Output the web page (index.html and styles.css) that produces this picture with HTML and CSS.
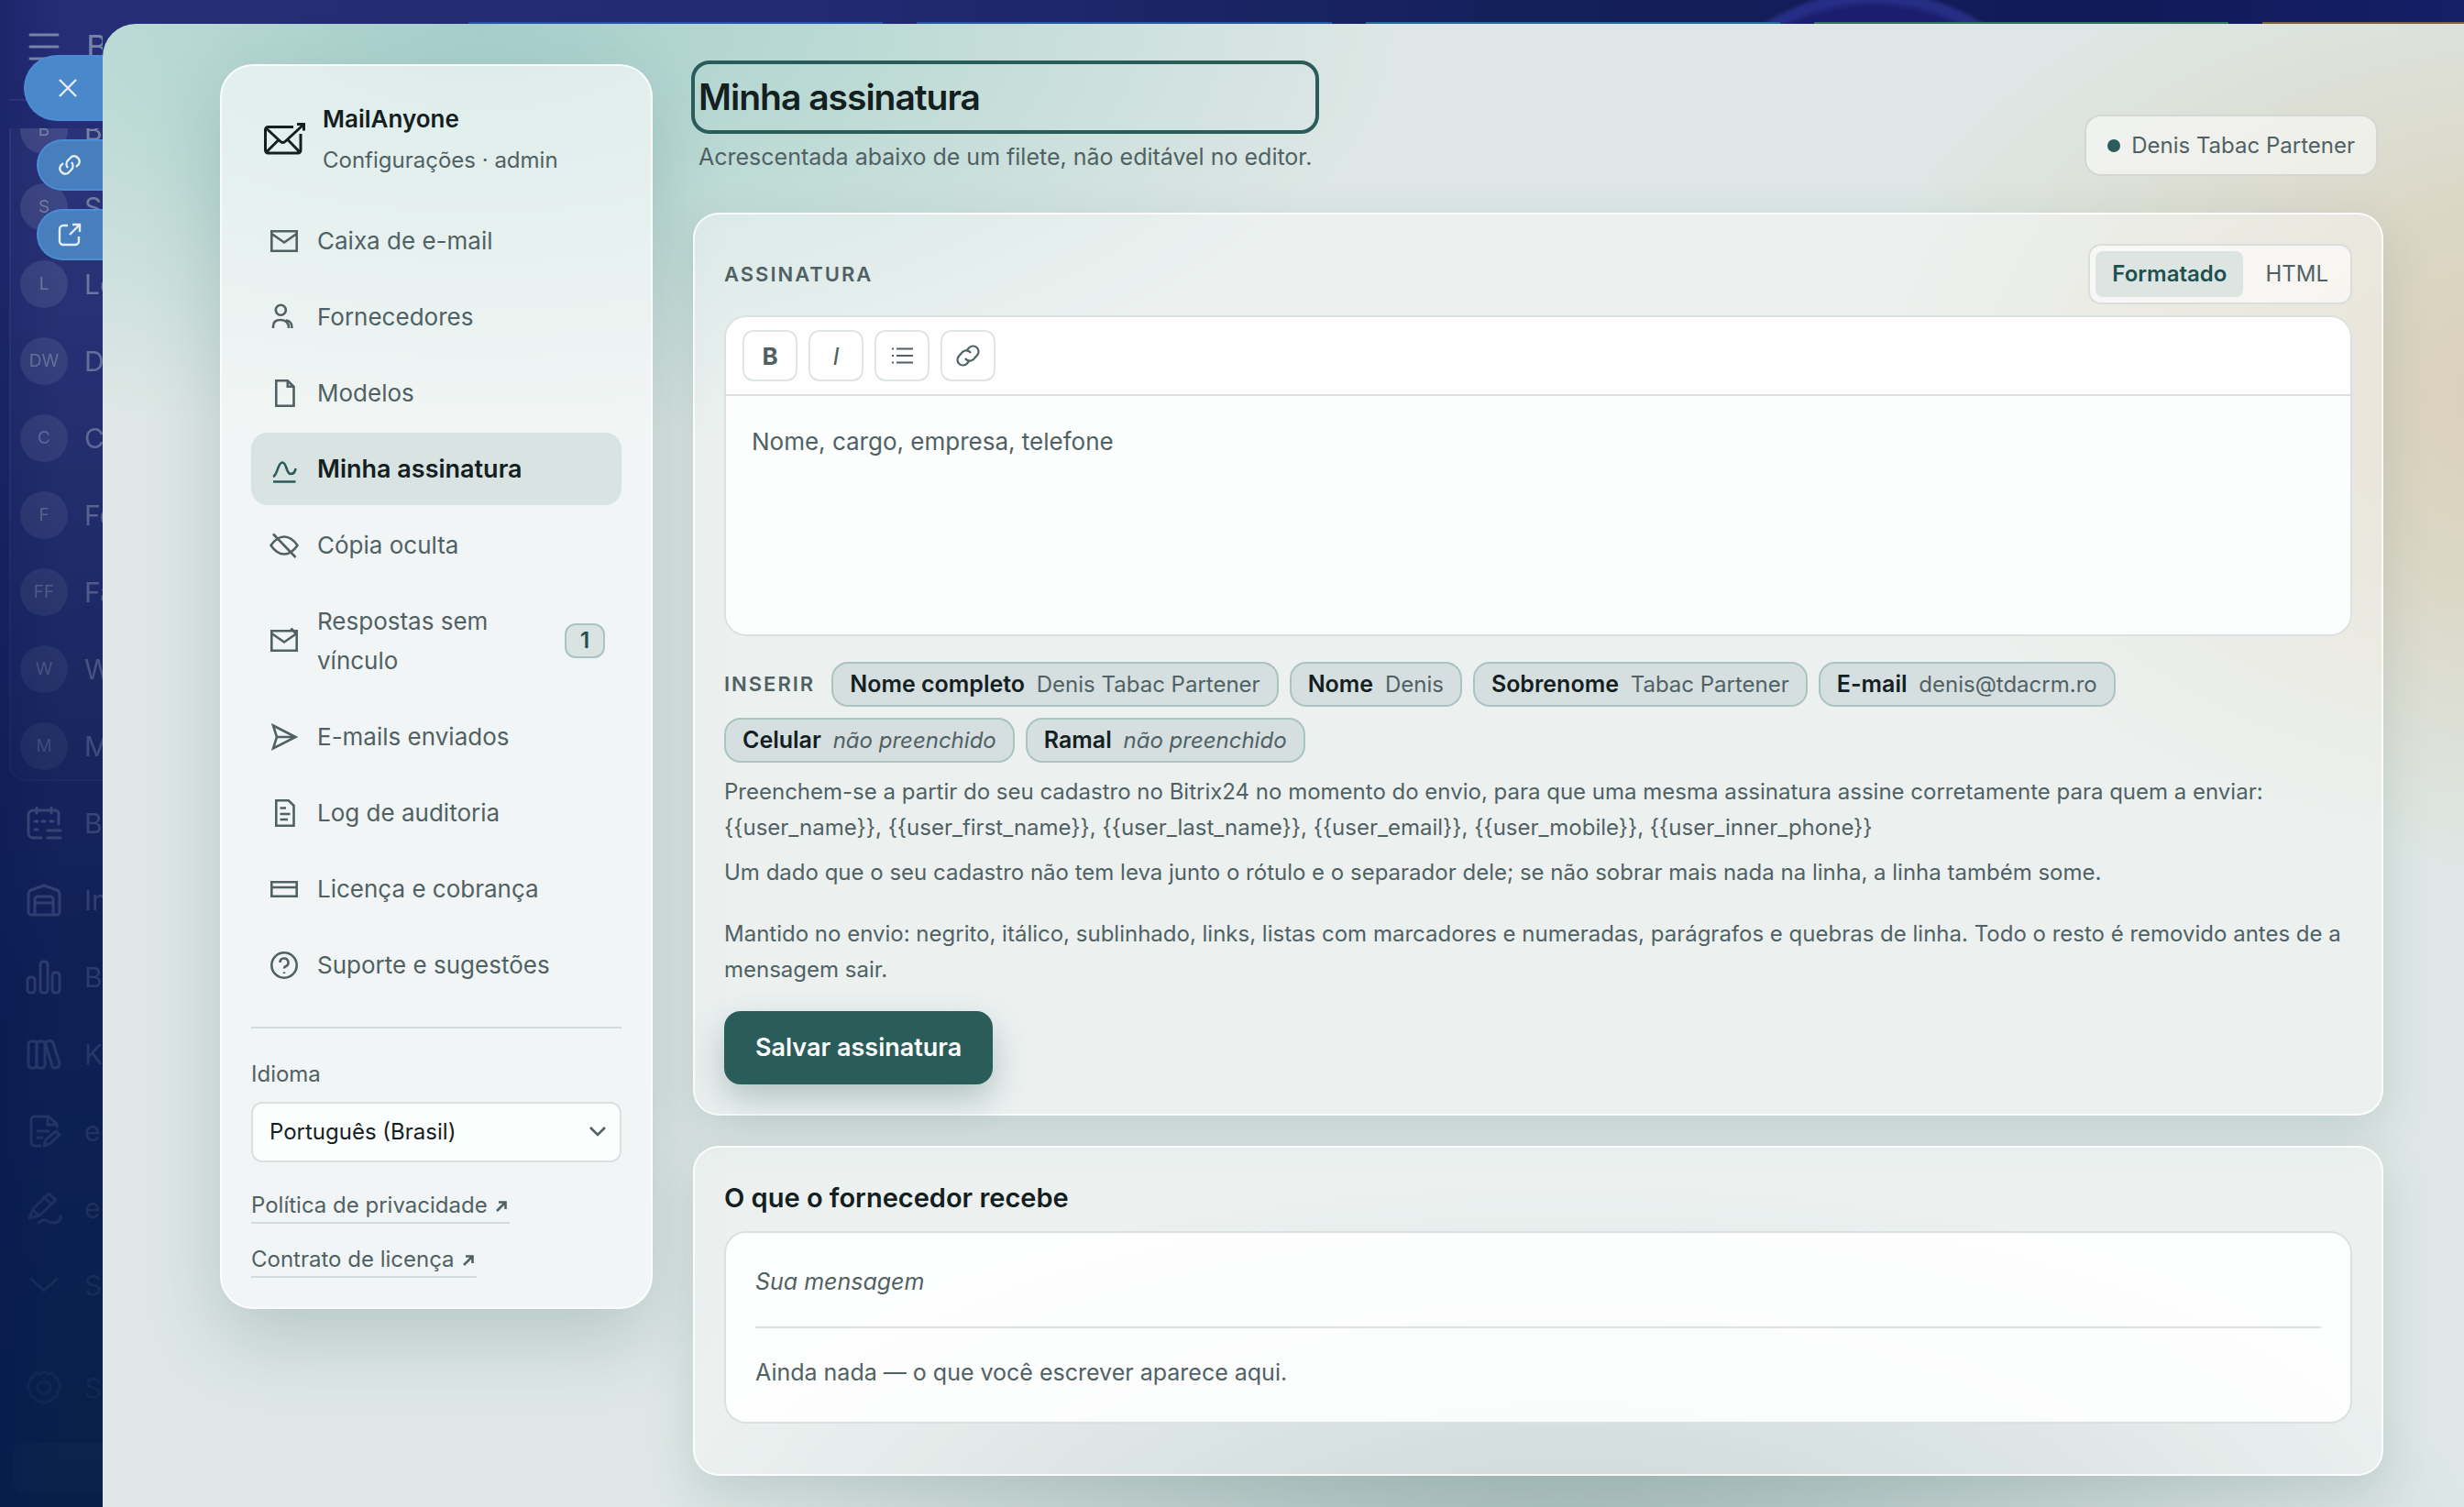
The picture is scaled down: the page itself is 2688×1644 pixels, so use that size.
FILE: index.html
```html
<!DOCTYPE html>
<html lang="pt-BR">
<head>
  <meta charset="UTF-8">
  <meta name="viewport" content="width=device-width, initial-scale=1.0">
  <title>MailAnyone - Minha assinatura</title>
  <link rel="stylesheet" href="styles.css">
</head>
<body>
  <!-- Portal menu behind the slider -->
  <aside class="rail">
    <div class="rail-top">
      <svg class="rail-icon" viewBox="0 0 40 40"><path d="M5 7h30M5 20h30M5 33h30"/></svg>
      <span class="rail-title">B</span>
    </div>
    <div class="rail-fade">
      <ul class="rail-group">
        <li><span class="avatar">B</span>B</li>
        <li><span class="avatar">S</span>S</li>
        <li><span class="avatar">L</span>Lo</li>
        <li><span class="avatar">DW</span>D</li>
        <li><span class="avatar">C</span>C</li>
        <li><span class="avatar">F</span>Fe</li>
        <li><span class="avatar">FF</span>Fa</li>
        <li><span class="avatar">W</span>W</li>
        <li><span class="avatar">M</span>M</li>
      </ul>
      <ul class="rail-list">
        <li><svg class="rail-icon" viewBox="0 0 40 40"><path d="M17 36H8a5 5 0 0 1-5-5V11a5 5 0 0 1 5-5h24a4 4 0 0 1 4 4v11M12 3v6M28 3v6M10 18h3M18 18h3M27 18h3M10 27h3M24 28h14M24 36h14"/></svg>B</li>
        <li><svg class="rail-icon" viewBox="0 0 40 40"><path d="M3 13c0-2 1-3 3-4l14-5 14 5c2 1 3 2 3 4v20a3 3 0 0 1-3 3H6a3 3 0 0 1-3-3zM10 36V19a3 3 0 0 1 3-3h14a3 3 0 0 1 3 3v17M10 23h20"/></svg>In</li>
        <li><svg class="rail-icon" viewBox="0 0 40 40"><rect x="2" y="20" width="8" height="17" rx="3"/><rect x="16" y="3" width="8" height="34" rx="3"/><rect x="29" y="15" width="8" height="22" rx="3"/></svg>B</li>
        <li><svg class="rail-icon" viewBox="0 0 40 40"><rect x="3" y="6" width="9" height="29" rx="3"/><rect x="12" y="6" width="9" height="29" rx="3"/><path d="M22 10c-1-2 0-4 2-4l2-1c2 0 3 1 4 3l7 22c0 2 0 4-2 4l-3 1c-2 0-3-1-3-2z"/></svg>K</li>
        <li><svg class="rail-icon" viewBox="0 0 40 40"><path d="M16 36h-6a4 4 0 0 1-4-4V8a4 4 0 0 1 4-4h15l9 8v3M24 4v9h10M13 20h12M13 27h5M20 36l2-7 11-9 4 4-11 10z"/></svg>e-</li>
        <li><svg class="rail-icon" viewBox="0 0 40 40"><path d="M4 31l4-10L25 4l8 7-18 17zM20 8l8 8M8 22l6 6M14 36c6-6 9-2 11-1 6 2 14 0 13-6"/></svg>e-</li>
        <li><svg class="rail-icon" viewBox="0 0 40 40"><path d="M6 13l14 13 14-13"/></svg>S</li>
        <li class="rail-settings"><svg class="rail-icon" viewBox="0 0 40 40"><circle cx="20" cy="20" r="7"/><path d="M16 5q4-5 8 0q6-3 7 3q6 0 4 6q5 4 0 9q2 6-4 7q-2 6-7 4q-4 5-8 0q-6 2-7-4q-6-1-4-7q-5-5 0-9q-2-6 4-6q1-6 7-3z"/></svg>S</li>
      </ul>
      <div class="rail-box"></div>
    </div>
    <!-- Slider tabs -->
    <button class="tab tab-close" aria-label="Fechar"><svg viewBox="0 0 28 28"><path d="M5 5l18 18M23 5L5 23"/></svg></button>
    <button class="tab tab-link" aria-label="Copiar link"><svg viewBox="0 0 28 28"><path d="M12 17a6 6 0 0 1 0-8l4-4a6 6 0 0 1 8 8l-3 3M16 11a6 6 0 0 1 0 8l-4 4a6 6 0 0 1-8-8l3-3"/></svg></button>
    <button class="tab tab-open" aria-label="Abrir em nova guia"><svg viewBox="0 0 28 28"><path d="M12 4H7a4 4 0 0 0-4 4v13a4 4 0 0 0 4 4h13a4 4 0 0 0 4-4v-5M17 3h8v8M25 3L14 14"/></svg></button>
  </aside>

  <div class="stage">
    <div class="board">
      <span class="col col-first"></span>
      <span class="col col-blue"></span>
      <span class="col col-cyan"></span>
      <span class="col col-green"></span>
      <span class="col col-gold"></span>
    </div>

    <div class="slider">
      <nav class="sidebar">
        <div class="brand">
          <svg class="logo" viewBox="0 0 48 48"><path d="M34 10.500H6.500a3 3 0 0 0-3 3V36a3 3 0 0 0 3 3H39a3 3 0 0 0 3-3V18M4.500 12L19.500 26q3 3 6 0L45 8M38 7.500h7.500v7M4.500 38L18 24.500M41 38L28 24.500"/></svg>
          <div>
            <strong>MailAnyone</strong>
            <span>Configurações · admin</span>
          </div>
        </div>

        <ul class="menu">
          <li><a href="#"><svg viewBox="0 0 32 32"><path d="M2.300 5.300h27.400v21.400H2.300zM2.300 8L16 17.500 29.700 8"/></svg><span>Caixa de e-mail</span></a></li>
          <li><a href="#"><svg viewBox="0 0 32 32"><circle cx="12.300" cy="8.300" r="5.500"/><path d="M4 28v-2c0-4.500 3-7 8-7 6 0 9 3 9 9M18 19.500c4 0 6.500 3.500 6.500 8.500"/></svg><span>Fornecedores</span></a></li>
          <li><a href="#"><svg viewBox="0 0 32 32"><path d="M7.300 2.300h12.500l6.700 6.500v20.900H7.300zM19.800 2.300v6.500h6.700"/></svg><span>Modelos</span></a></li>
          <li><a href="#" class="active"><svg viewBox="0 0 32 32"><path d="M4 24C9 22 9 8.500 14 8.500s4 12.500 9 12.500c3 0 5-2 5.500-6M4 29.500h24.500"/></svg><span>Minha assinatura</span></a></li>
          <li><a href="#"><svg viewBox="0 0 32 32"><path d="M1.500 16C6 9.500 10.500 6.500 16 6.500S26 9.500 30.500 16C26 22.500 21.500 25.500 16 25.500S6 22.500 1.500 16zM4 3.500L28.500 29"/></svg><span>Cópia oculta</span></a></li>
          <li><a href="#"><svg viewBox="0 0 32 32"><path d="M2.300 5.300h27.400v21.400H2.300zM2.300 8L16 17.500 29.700 8M23.500 2.500L29.500 9"/></svg><span>Respostas sem vínculo</span><b class="count">1</b></a></li>
          <li><a href="#"><svg viewBox="0 0 32 32"><path d="M4 3.500L28.500 16 4 28.500 8 16zM8 16h20"/></svg><span>E-mails enviados</span></a></li>
          <li><a href="#"><svg viewBox="0 0 32 32"><path d="M7.300 2.300h13.500l5.700 5.500v21.900H7.300zM11.500 10.500H18M11.500 17h11M11.500 23H20"/></svg><span>Log de auditoria</span></a></li>
          <li><a href="#"><svg viewBox="0 0 32 32"><path d="M2.300 8.300h27.400v15.400H2.300zM2.300 14h27.400"/></svg><span>Licença e cobrança</span></a></li>
          <li><a href="#"><svg viewBox="0 0 32 32"><circle cx="16" cy="16" r="13.700"/><path d="M11.500 13a4.500 4.500 0 1 1 6.500 4c-1.500.7-2 1.300-2 2.500M16 23.500v1.500"/></svg><span>Suporte e sugestões</span></a></li>
        </ul>

        <div class="side-foot">
          <label for="lang">Idioma</label>
          <div class="select">
            <select id="lang">
              <option>Português (Brasil)</option>
            </select>
            <svg viewBox="0 0 20 20"><path d="M2 6l8 8 8-8"/></svg>
          </div>
          <a href="#">Política de privacidade <svg viewBox="0 0 14 14"><path d="M2 12l9-9M4 2.500h7.500V10"/></svg></a>
          <a href="#">Contrato de licença <svg viewBox="0 0 14 14"><path d="M2 12l9-9M4 2.500h7.500V10"/></svg></a>
        </div>
      </nav>

      <main class="main">
        <header class="head">
          <div>
            <h1>Minha assinatura</h1>
            <p>Acrescentada abaixo de um filete, não editável no editor.</p>
          </div>
          <span class="who">Denis Tabac Partener</span>
        </header>

        <section class="card">
          <div class="card-top">
            <label class="caps" for="signature">Assinatura</label>
            <div class="toggle">
              <button class="on">Formatado</button>
              <button>HTML</button>
            </div>
          </div>

          <div class="editor">
            <div class="tools">
              <button aria-label="Negrito"><b>B</b></button>
              <button aria-label="Itálico"><i>I</i></button>
              <button aria-label="Lista"><svg viewBox="0 0 28 28"><path d="M8 6.500h18M8 14h18M8 21.500h18M3 6.500h2M3 14h2M3 21.500h2"/></svg></button>
              <button aria-label="Link"><svg viewBox="0 0 28 28"><path d="M12.500 8.500L15 5.500a6 6 0 0 1 9 8l-4 4.500a6 6 0 0 1-9-1M15.500 19.500L13 22.500a6 6 0 0 1-9-8L8 10a6 6 0 0 1 9 1"/></svg></button>
            </div>
            <textarea id="signature" placeholder="Nome, cargo, empresa, telefone"></textarea>
          </div>

          <div class="tokens">
            <span class="caps">Inserir</span>
            <button><b>Nome completo</b> Denis Tabac Partener</button>
            <button><b>Nome</b> Denis</button>
            <button><b>Sobrenome</b> Tabac Partener</button>
            <button><b>E-mail</b> denis@tdacrm.ro</button>
            <button><b>Celular</b> <i>não preenchido</i></button>
            <button><b>Ramal</b> <i>não preenchido</i></button>
          </div>

          <p class="hint">Preenchem-se a partir do seu cadastro no Bitrix24 no momento do envio, para que uma mesma assinatura assine corretamente para quem a enviar:<br>{{user_name}}, {{user_first_name}}, {{user_last_name}}, {{user_email}}, {{user_mobile}}, {{user_inner_phone}}</p>
          <p class="hint">Um dado que o seu cadastro não tem leva junto o rótulo e o separador dele; se não sobrar mais nada na linha, a linha também some.</p>
          <p class="hint kept">Mantido no envio: negrito, itálico, sublinhado, links, listas com marcadores e numeradas, parágrafos e quebras de linha. Todo o resto é removido antes de a mensagem sair.</p>
          <button class="save">Salvar assinatura</button>
        </section>

        <section class="card preview-card">
          <h2>O que o fornecedor recebe</h2>
          <div class="preview">
            <p><i>Sua mensagem</i></p>
            <hr>
            <p>Ainda nada — o que você escrever aparece aqui.</p>
          </div>
        </section>
      </main>
    </div>
  </div>
</body>
</html>
```

FILE: styles.css
```css
:root {
    --ink: #14201f;
    --muted: #506164;
    --accent: #2a5c5a;
    --line: #dbe0e0;
    --soft: #d8e3e2;
}

* {
    box-sizing: border-box;
}

body {
    margin: 0;
    display: flex;
    min-height: 100vh;
    color: var(--muted);
    font-family: Inter, "Noto Sans", sans-serif;
    font-size: 26px;
    line-height: 43px;
    background: linear-gradient(to bottom, #262d76 0, #232c72 20%, #182560 45%, #0f2056 65%, #082048 100%);
}

h1, h2, p, ul {
    margin: 0;
    padding: 0;
}

ul {
    list-style: none;
}

a {
    color: inherit;
    text-decoration: none;
}

button, select, textarea {
    font: inherit;
    color: inherit;
    border: 0;
    margin: 0;
    padding: 0;
    background: none;
}

button {
    cursor: pointer;
}

svg {
    flex: none;
    fill: none;
    stroke: currentColor;
    stroke-width: 2.6;
}

/* Portal menu */
.rail {
    position: relative;
    flex: 0 0 112px;
    height: 100vh;
    overflow: hidden;
    color: #7782a4;
    font-size: 30px;
    background: linear-gradient(to right, rgba(6, 20, 80, 0.3), rgba(6, 20, 80, 0) 60%);
}

.rail-top {
    display: flex;
    align-items: center;
    gap: 26px;
    height: 110px;
    margin-left: 10px;
    padding: 0 0 6px 18px;
    border-bottom: 2px solid #2b3379;
}

.rail-title {
    font-size: 36px;
}

.rail-icon {
    width: 40px;
    height: 40px;
    stroke-width: 3;
    stroke-linecap: round;
    stroke-linejoin: round;
}

.rail-fade {
    margin-top: 30px;
    -webkit-mask-image: linear-gradient(to bottom, #000, rgba(0, 0, 0, 0.35) 52%, rgba(0, 0, 0, 0.06) 95%);
    mask-image: linear-gradient(to bottom, #000, rgba(0, 0, 0, 0.35) 52%, rgba(0, 0, 0, 0.06) 95%);
}

.rail-group {
    display: flex;
    flex-direction: column;
    justify-content: flex-end;
    height: 712px;
    margin-left: 10px;
    overflow: hidden;
    border: solid rgba(255, 255, 255, 0.05);
    border-width: 0 0 2px 2px;
    border-radius: 0 0 0 18px;
    background: rgba(255, 255, 255, 0.03);
}

.rail li {
    display: flex;
    flex: none;
    align-items: center;
    gap: 18px;
    height: 84px;
    white-space: nowrap;
}

.rail-group li {
    padding-left: 10px;
}

.rail-group li:last-child {
    margin-bottom: -6px;
}

.rail-list {
    padding-top: 4px;
}

.rail-list li {
    gap: 24px;
    padding-left: 28px;
}

.rail-list .rail-settings {
    margin-top: 28px;
}

.avatar {
    flex: none;
    width: 52px;
    height: 52px;
    border-radius: 50%;
    background: rgba(255, 255, 255, 0.1);
    font-size: 19px;
    line-height: 52px;
    text-align: center;
}

.rail-box {
    height: 54px;
    margin: 18px 0 0 14px;
    border-radius: 12px 0 0 12px;
    background: rgba(255, 255, 255, 0.25);
}

.tab {
    position: absolute;
    right: 0;
    display: flex;
    align-items: center;
    width: 72px;
    height: 56px;
    padding-left: 20px;
    border: 2px solid #4a8dd6;
    border-right: 0;
    border-radius: 28px 0 0 28px;
    color: #e4ecf5;
    background: #477fbd;
}

.tab svg {
    width: 28px;
    height: 28px;
    stroke-width: 2.4;
}

.tab-close {
    top: 60px;
    width: 86px;
    height: 72px;
    padding-left: 32px;
    border-radius: 36px 0 0 36px;
    background: #4b88cb;
}

.tab-link {
    top: 152px;
}

.tab-open {
    top: 228px;
}

/* Strip of the board above the slider */
.stage {
    display: flex;
    flex: 1;
    flex-direction: column;
    min-width: 0;
}

.board {
    display: flex;
    align-items: flex-end;
    gap: 37px;
    height: 26px;
    padding-left: 399px;
    overflow: hidden;
    background:
        radial-gradient(circle 226px at 75% 214px, #1a1e6c 0 206px, #262d84 214px 220px, rgba(38, 45, 132, 0) 226px),
        linear-gradient(to right, #272e78, #222a72 30%, #14205a 60%, #111a58 85%, #141f66);
}

.col {
    flex: 1;
    height: 2px;
}

.col-first { background: #2453a8; }
.col-blue { background: #2657a2; }
.col-cyan { background: #286a95; }
.col-green { background: #36705f; }
.col-gold {
    flex: 0 0 220px;
    background: #7a6342;
}

/* Slider */
.slider {
    display: flex;
    flex: 1;
    align-items: flex-start;
    gap: 44px;
    padding: 44px 88px 32px 128px;
    border-radius: 36px 0 0 0;
    background:
        radial-gradient(ellipse 1000px 460px at 16% 0, #a6cfcb, rgba(178, 214, 208, 0.85) 35%, rgba(223, 231, 229, 0) 100%),
        radial-gradient(ellipse 780px 520px at 104% 25%, #dacfb8, rgba(218, 208, 184, 0.7) 40%, rgba(223, 231, 229, 0) 100%),
        radial-gradient(ellipse 1000px 420px at 62% 104%, #a3b9b8, rgba(163, 185, 184, 0.5) 50%, rgba(223, 231, 229, 0) 100%),
        #dee7e5;
}

.sidebar {
    flex: 0 0 472px;
    padding: 32px;
    border: 2px solid rgba(255, 255, 255, 0.8);
    border-radius: 36px;
    background: rgba(255, 255, 255, 0.6);
    box-shadow: 0 32px 80px rgba(42, 92, 90, 0.22);
}

.brand {
    display: flex;
    align-items: center;
    gap: 18px;
    padding: 3px 12px 26px;
}

.brand strong,
.brand span {
    display: block;
    font-size: 24px;
    line-height: 45px;
}

.brand strong {
    color: var(--ink);
    font-size: 26px;
    font-weight: 600;
}

.logo {
    width: 48px;
    height: 48px;
    color: var(--ink);
    stroke-width: 3;
}

.menu {
    display: flex;
    flex-direction: column;
    gap: 4px;
}

.menu a {
    display: flex;
    align-items: center;
    gap: 20px;
    padding: 18px 18px 18px 20px;
    border-radius: 18px;
}

.menu svg {
    width: 32px;
    height: 32px;
}

.menu span {
    flex: 1;
}

.menu .active {
    color: var(--ink);
    font-size: 27px;
    font-weight: 600;
    background: var(--soft);
}

.menu .active svg {
    color: var(--accent);
}

.count {
    width: 44px;
    border: 2px solid #abc3c1;
    border-radius: 12px;
    color: #20504e;
    background: var(--soft);
    font-size: 24px;
    font-weight: 600;
    line-height: 34px;
    text-align: center;
}

.side-foot {
    display: flex;
    flex-direction: column;
    align-items: flex-start;
    margin-top: 28px;
    padding-top: 30px;
    border-top: 2px solid #d3dbdb;
    font-size: 24px;
    line-height: 40px;
}

.select {
    position: relative;
    width: 100%;
    margin: 10px 0 28px;
}

.select select {
    width: 100%;
    height: 66px;
    padding: 0 18px;
    border: 2px solid var(--line);
    border-radius: 12px;
    color: var(--ink);
    background: #fcfdfd;
    appearance: none;
}

.select svg {
    position: absolute;
    top: 22px;
    right: 16px;
    width: 20px;
    height: 20px;
}

.side-foot a {
    border-bottom: 2px solid #d3dbdb;
    line-height: 37px;
}

.side-foot a + a {
    margin-top: 20px;
}

.side-foot a svg {
    width: 14px;
    height: 14px;
    margin: 0 2px;
}

/* Content */
.main {
    flex: 1;
    min-width: 0;
}

.head {
    display: flex;
    align-items: flex-end;
    justify-content: space-between;
    padding: 4px 6px 40px;
}

.head h1 {
    outline: 4px solid var(--accent);
    outline-offset: 4px;
    border-radius: 12px;
    color: var(--ink);
    font-size: 39px;
    font-weight: 600;
    line-height: 64px;
    letter-spacing: -1px;
}

.head p {
    margin-top: 12px;
    font-size: 25px;
    line-height: 42px;
}

.who {
    display: flex;
    align-items: center;
    gap: 12px;
    padding: 12px 23px;
    border: 2px solid #d3d8d5;
    border-radius: 18px;
    background: rgba(255, 255, 255, 0.55);
    font-size: 24px;
    line-height: 39px;
}

.who::before {
    content: "";
    width: 14px;
    height: 14px;
    border-radius: 50%;
    background: var(--accent);
}

.card {
    padding: 32px;
    border: 2px solid rgba(255, 255, 255, 0.8);
    border-radius: 28px;
    background: rgba(255, 255, 255, 0.42);
    box-shadow: 0 16px 50px rgba(42, 92, 90, 0.16);
}

.card + .card {
    margin-top: 33px;
}

.card-top {
    display: flex;
    align-items: center;
    justify-content: space-between;
    margin-bottom: 12px;
}

.caps {
    font-size: 22px;
    font-weight: 600;
    letter-spacing: 2px;
    text-transform: uppercase;
}

.toggle {
    display: flex;
    padding: 6px;
    border: 2px solid #d9dedc;
    border-radius: 14px;
    background: rgba(255, 255, 255, 0.6);
}

.toggle button {
    padding: 0 18px 0 24px;
    border-radius: 8px;
    font-size: 24px;
    line-height: 50px;
}

.toggle .on {
    padding: 0 18px;
    color: #20504e;
    background: #dde5e3;
    font-weight: 600;
}

.editor {
    overflow: hidden;
    border: 2px solid var(--line);
    border-radius: 24px;
    background: #fff;
}

.tools {
    display: flex;
    gap: 12px;
    padding: 14px 18px;
    border-bottom: 2px solid var(--line);
}

.tools button {
    display: flex;
    align-items: center;
    justify-content: center;
    width: 60px;
    height: 56px;
    border: 2px solid #dfe5e4;
    border-radius: 12px;
}

.tools svg {
    width: 28px;
    height: 28px;
    stroke-width: 2.2;
}

.editor textarea {
    display: block;
    width: 100%;
    height: 260px;
    padding: 28px;
    background: #fcfdfd;
    resize: none;
}

.editor textarea::placeholder {
    color: var(--muted);
    opacity: 1;
}

.tokens {
    display: flex;
    flex-wrap: wrap;
    align-items: center;
    gap: 12px;
    margin: 28px 0 12px;
}

.tokens .caps {
    margin-right: 6px;
}

.tokens button {
    padding: 0 18px;
    border: 2px solid #abc3c1;
    border-radius: 18px;
    background: #d6dfe0;
    font-size: 24px;
    line-height: 45px;
}

.tokens b {
    margin-right: 6px;
    color: var(--ink);
    font-size: 25px;
    font-weight: 600;
}

.hint {
    margin-bottom: 10px;
    font-size: 24px;
    line-height: 39px;
}

.kept {
    margin-top: 28px;
    margin-bottom: 26px;
}

.save {
    padding: 18px 34px;
    border-radius: 18px;
    color: #fff;
    background: var(--accent);
    font-size: 27px;
    font-weight: 600;
    line-height: 44px;
    box-shadow: 0 16px 36px rgba(42, 92, 90, 0.3);
}

.preview-card {
    padding-bottom: 55px;
}

.card h2 {
    margin-bottom: 13px;
    color: var(--ink);
    font-size: 29px;
    font-weight: 600;
    line-height: 46px;
}

.preview {
    padding: 32px;
    border: 2px solid var(--line);
    border-radius: 24px;
    background: rgba(255, 255, 255, 0.88);
    font-size: 25px;
}

.preview hr {
    margin: 27px 0;
    border: 0;
    border-top: 2px solid var(--line);
}
```
